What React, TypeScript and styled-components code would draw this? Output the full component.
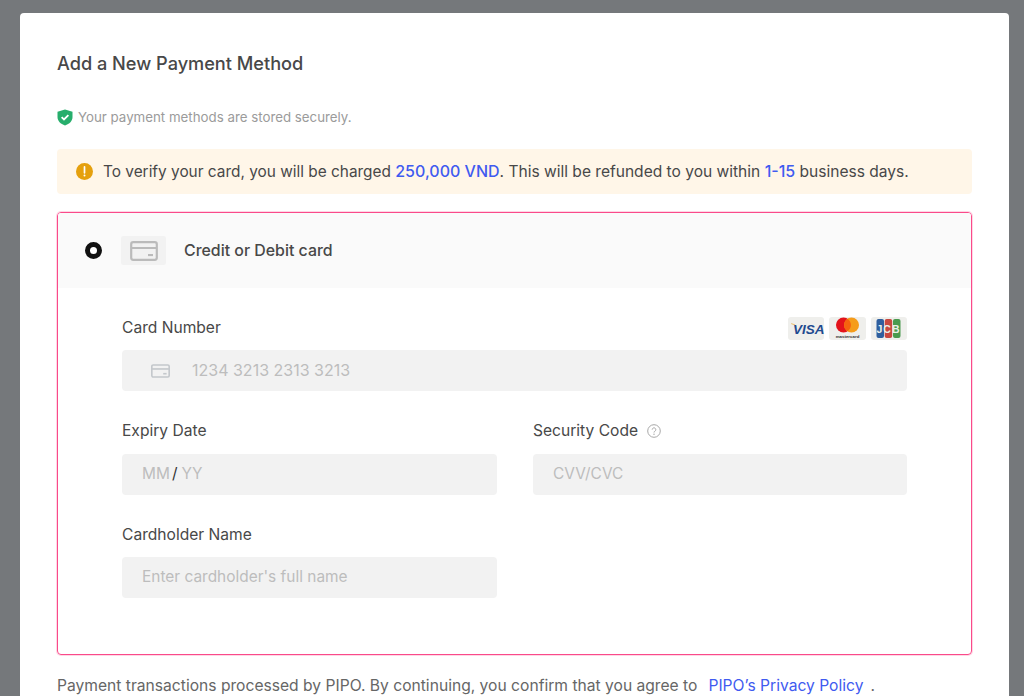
import React from "react";
import styled, { createGlobalStyle } from "styled-components";

const Global = createGlobalStyle`
  html, body { margin: 0; padding: 0; height: 696px; overflow: hidden; background: #75787b; }
  * { box-sizing: border-box; }
  body { font-family: Inter, "Liberation Sans", sans-serif; color: #3f3f3f; }
`;

const Page = styled.div`
  height: 696px;
  padding: 13px 15px 0 20px;
  overflow: hidden;
`;
const Modal = styled.div`
  background: #fff;
  border-radius: 4px 4px 0 0;
  height: 683px;
  padding: 37px 37px 0;
  overflow: hidden;
`;
const Title = styled.h2`
  margin: 0;
  font-size: 18.15px;
  line-height: 26px;
  font-weight: 500;
  color: #484848;
`;
const Secure = styled.div`
  display: flex;
  align-items: center;
  gap: 5px;
  margin-top: 32px;
  height: 18px;
  font-size: 13.3px;
  color: #9b9b9b;
`;
const Notice = styled.div`
  display: flex;
  align-items: center;
  gap: 10px;
  margin-top: 23px;
  height: 45px;
  padding: 0 19px;
  background: #fff6e8;
  border-radius: 4px;
  font-size: 15.55px;
  color: #484848;
`;
const NoticeText = styled.span`
  margin-top: -2px;
`;
const Lead = styled.span`
  font-size: 15.4px;
`;
const Blue = styled.span`
  color: #3f5bf0;
  font-size: 16px;
  font-weight: 500;
`;
const Card = styled.div`
  margin-top: 18px;
  height: 443px;
  border: 1px solid #fa4a8a;
  box-shadow: 0 0 0 1px rgba(250, 74, 138, 0.22);
  border-radius: 4px;
  overflow: hidden;
`;
const CardHeader = styled.div`
  display: flex;
  align-items: center;
  height: 75px;
  padding-left: 27px;
  background: #fafafa;
`;
const Radio = styled.span`
  width: 17px;
  height: 17px;
  border-radius: 50%;
  border: 5.5px solid #111;
  background: #fff;
  margin-right: 19px;
`;
const MethodIcon = styled.span`
  display: flex;
  align-items: center;
  justify-content: center;
  width: 45px;
  height: 29px;
  background: #f2f2f2;
  border-radius: 2px;
  margin-right: 18px;
`;
const MethodName = styled.span`
  font-size: 15.9px;
  font-weight: 500;
  color: #484848;
`;
const Form = styled.div`
  display: grid;
  grid-template-columns: 375px 374px;
  column-gap: 36px;
  padding: 28px 64px 0;
`;
const Field = styled.div<{ $wide?: boolean }>`
  grid-column: ${(p) => (p.$wide ? "1 / -1" : "auto")};
  margin-bottom: 28.5px;
`;
const LabelRow = styled.div`
  display: flex;
  align-items: center;
  justify-content: space-between;
  height: 24px;
  margin-bottom: 10px;
  font-size: 15.6px;
  color: #484848;
`;
const LabelText = styled.span`
  display: flex;
  align-items: center;
  gap: 9px;
  margin-top: -2px;
`;
const Brands = styled.span`
  display: flex;
  gap: 5px;
`;
const Brand = styled.span`
  display: flex;
  align-items: center;
  justify-content: center;
  width: 36.4px;
  height: 23px;
  background: #efefec;
  border-radius: 3px;
`;
const Input = styled.div<{ $digits?: boolean }>`
  display: flex;
  align-items: center;
  height: 41px;
  padding: 0 0 2px 20px;
  background: #f2f2f2;
  border-radius: 4px;
  font-size: ${(p) => (p.$digits ? "16px" : "15.45px")};
  color: #bdbdbd;
`;
const InputIcon = styled.span`
  display: flex;
  margin: 2px 22px 0 9px;
`;
const Slash = styled.span`
  color: #333;
  margin: 0 4px 0 2px;
`;
const Footer = styled.div`
  display: flex;
  margin-top: 21px;
  font-size: 15.63px;
  line-height: 20px;
  color: #666;
  white-space: nowrap;
`;
const PolicyLink = styled.a`
  color: #3f5bf0;
  margin: 0 7px 0 11px;
`;

const CardGlyph = ({ w, h, c, sw }: { w: number; h: number; c: string; sw: number }) => (
  <svg width={w} height={h} viewBox="0 0 28 20" fill="none">
    <rect x="1.2" y="1.2" width="25.6" height="17.6" rx="2" stroke={c} strokeWidth={sw} />
    <path d="M1 7h26" stroke={c} strokeWidth={sw} />
    <path d="M18 14h5" stroke={c} strokeWidth={sw} />
  </svg>
);

const Shield = () => (
  <svg width="16" height="17" viewBox="0 0 16 17">
    <path d="M8 .5 15.5 2.8V8c0 4-3 7-7.5 8.5C3.5 15 .5 12 .5 8V2.8Z" fill="#27ae6c" />
    <path d="M4.6 8.2 7 10.5l4.4-4.3" fill="none" stroke="#fff" strokeWidth="1.8" />
  </svg>
);

const Warn = () => (
  <svg width="17" height="17" viewBox="0 0 17 17">
    <circle cx="8.5" cy="8.5" r="8.5" fill="#e5a00d" />
    <path d="M8.5 3.8v6" stroke="#fff" strokeWidth="1.7" strokeLinecap="round" />
    <circle cx="8.5" cy="12.6" r="1" fill="#fff" />
  </svg>
);

const Help = () => (
  <svg width="14" height="14" viewBox="0 0 14 14" fill="none">
    <circle cx="7" cy="7" r="6.3" stroke="#a8a8a8" />
    <path d="M5.2 5.6a1.8 1.8 0 1 1 2.7 1.6c-.6.3-.9.7-.9 1.3" stroke="#a8a8a8" />
    <circle cx="7" cy="10.2" r=".7" fill="#a8a8a8" />
  </svg>
);

const Visa = () => (
  <svg width="33" height="15" viewBox="0 0 33 15" overflow="visible">
    <path d="M1 2.5c3 .1 5 1.3 6 3.8C5.8 4.5 3.8 3.4 1 3Z" fill="#e8a93a" />
    <text x="3" y="12.5" fontFamily="Liberation Sans, sans-serif" fontSize="13.5" fontWeight="700" fontStyle="italic" fill="#1f4a8f">VISA</text>
  </svg>
);

const Master = () => (
  <svg width="27" height="22" viewBox="0 0 27 22" overflow="visible">
    <circle cx="9.5" cy="8" r="7.5" fill="#e3131b" />
    <circle cx="17.5" cy="8" r="7.5" fill="#f59c1a" />
    <path d="M13.5 1.7a7.5 7.5 0 0 1 0 12.6 7.5 7.5 0 0 1 0-12.6Z" fill="#f5620f" />
    <text x="13.5" y="20.5" textAnchor="middle" fontFamily="Liberation Sans, sans-serif" fontSize="4.4" fontWeight="700" fill="#333">mastercard</text>
  </svg>
);

const Jcb = () => (
  <svg width="25" height="19" viewBox="0 0 25 19" overflow="visible">
    <rect x="0.5" y="0" width="7.5" height="19" rx="2" fill="#2f5f9e" />
    <rect x="8.7" y="0" width="7.5" height="19" rx="2" fill="#c9483f" />
    <rect x="17" y="0" width="7.5" height="19" rx="2" fill="#4a9a4f" />
    <text x="12.5" y="13.5" textAnchor="middle" fontFamily="Liberation Sans, sans-serif" fontSize="10.5" fontWeight="700" letterSpacing="1" fill="#e9efe9">JCB</text>
  </svg>
);

export default function App() {
  return (
    <Page>
      <Global />
      <Modal>
        <Title>Add a New Payment Method</Title>
        <Secure>
          <Shield />
          Your payment methods are stored securely.
        </Secure>
        <Notice>
          <Warn />
          <NoticeText>
            <Lead>To verify your card, you will be charged </Lead>
            <Blue>250,000 VND</Blue>. This will be refunded to you within <Blue>1-15</Blue> business days.
          </NoticeText>
        </Notice>
        <Card>
          <CardHeader>
            <Radio />
            <MethodIcon>
              <CardGlyph w={28} h={20} c="#bbbbbb" sw={2.2} />
            </MethodIcon>
            <MethodName>Credit or Debit card</MethodName>
          </CardHeader>
          <Form>
            <Field $wide>
              <LabelRow>
                <LabelText>Card Number</LabelText>
                <Brands>
                  <Brand><Visa /></Brand>
                  <Brand><Master /></Brand>
                  <Brand><Jcb /></Brand>
                </Brands>
              </LabelRow>
              <Input $digits>
                <InputIcon>
                  <CardGlyph w={19} h={14} c="#c4c8cc" sw={2.4} />
                </InputIcon>
                1234 3213 2313 3213
              </Input>
            </Field>
            <Field>
              <LabelRow><LabelText>Expiry Date</LabelText></LabelRow>
              <Input>MM<Slash>/</Slash>YY</Input>
            </Field>
            <Field>
              <LabelRow>
                <LabelText>Security Code <Help /></LabelText>
              </LabelRow>
              <Input>CVV/CVC</Input>
            </Field>
            <Field>
              <LabelRow><LabelText>Cardholder Name</LabelText></LabelRow>
              <Input>Enter cardholder's full name</Input>
            </Field>
          </Form>
        </Card>
        <Footer>
          Payment transactions processed by PIPO. By continuing, you confirm that you agree to
          <PolicyLink>PIPO’s Privacy Policy</PolicyLink>.
        </Footer>
      </Modal>
    </Page>
  );
}
